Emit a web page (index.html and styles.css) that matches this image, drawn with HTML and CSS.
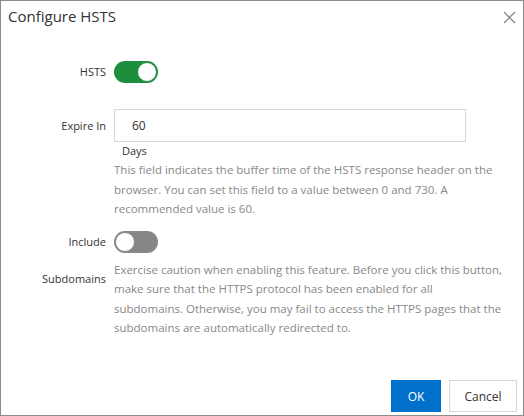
FILE: index.html
```html
<!DOCTYPE html>
<html lang="en">
<head>
    <meta charset="UTF-8">
    <meta name="viewport" content="width=device-width, initial-scale=1.0">
    <title>Configure HSTS</title>
    <link rel="stylesheet" href="styles.css">
</head>
<body>
    <div class="dialog">
        <div class="dialog-header">
            <h2 class="dialog-title">Configure HSTS</h2>
            <button class="close-button" aria-label="Close">
                <svg width="13" height="13" viewBox="0 0 13 13">
                    <path d="M1 1 L12 12 M12 1 L1 12" stroke="#8c8c8c" stroke-width="1.4" fill="none"/>
                </svg>
            </button>
        </div>

        <div class="dialog-body">
            <div class="form-row row-hsts">
                <label class="form-label">HSTS</label>
                <div class="form-control">
                    <span class="switch switch-on"><span class="switch-knob"></span></span>
                </div>
            </div>

            <div class="form-row row-expire">
                <label class="form-label label-input">Expire In</label>
                <div class="form-control">
                    <input type="text" class="text-input" value="60">
                    <div class="unit">Days</div>
                    <p class="help">This field indicates the buffer time of the HSTS response header on the browser. You can set this field to a value between 0 and 730. A recommended value is 60.</p>
                </div>
            </div>

            <div class="form-row row-include">
                <label class="form-label">Include</label>
                <div class="form-control">
                    <span class="switch switch-off"><span class="switch-knob"></span></span>
                </div>
            </div>

            <div class="form-row row-subdomains">
                <label class="form-label label-sub">Subdomains</label>
                <div class="form-control">
                    <p class="help">Exercise caution when enabling this feature. Before you click this button, make sure that the HTTPS protocol has been enabled for all<br>subdomains. Otherwise, you may fail to access the HTTPS pages that the subdomains are automatically redirected to.</p>
                </div>
            </div>
        </div>

        <div class="dialog-footer">
            <button class="btn btn-primary">OK</button>
            <button class="btn btn-default">Cancel</button>
        </div>
    </div>
</body>
</html>
```

FILE: styles.css
```css
html, body {
    margin: 0;
    padding: 0;
    height: 100%;
}
body {
    background-color: #fff;
    font-family: "Open Sans", "Noto Sans", sans-serif;
    color: #333;
}
.dialog {
    display: flex;
    flex-direction: column;
    height: 100vh;
    box-sizing: border-box;
    border: 1px solid #8c8c8c;
}
.dialog-header {
    display: flex;
    align-items: center;
    justify-content: space-between;
    padding: 5px 7px 0 7px;
    height: 21px;
}
.dialog-title {
    margin: 0;
    font-size: 15px;
    font-weight: normal;
    line-height: 21px;
    color: #333;
}
.close-button {
    border: none;
    background: none;
    padding: 0;
    margin-top: 2px;
    cursor: pointer;
    display: flex;
}
.dialog-body {
    padding: 34px 9px 0 7px;
}
.form-row {
    display: flex;
    gap: 8px;
}
.form-label {
    width: 98px;
    flex: none;
    text-align: right;
    font-size: 11px;
    color: #333;
    line-height: 22px;
}
.form-control {
    flex: 1;
    min-width: 0;
}
.row-expire {
    margin-top: 26px;
}
.label-input {
    line-height: 33px;
}
.row-include {
    margin-top: 12px;
}
.row-subdomains {
    margin-top: 7px;
}
.label-sub {
    line-height: 18px;
    padding-top: 10px;
}
.switch {
    display: block;
    position: relative;
    width: 44px;
    height: 22px;
    border-radius: 11px;
    box-sizing: border-box;
}
.switch-on {
    background-color: #1e8e3e;
}
.switch-off {
    background-color: #878787;
}
.switch-knob {
    position: absolute;
    top: 1px;
    width: 20px;
    height: 20px;
    border-radius: 50%;
    background-color: #fff;
    box-sizing: border-box;
}
.switch-on .switch-knob {
    right: 1px;
    border: 1px solid #1e8e3e;
}
.switch-off .switch-knob {
    left: 1px;
    border: 1px solid #878787;
}
.text-input {
    display: block;
    width: 352px;
    height: 33px;
    box-sizing: border-box;
    border: 1px solid #d7d7d7;
    padding: 0 17px;
    font-family: inherit;
    font-size: 12px;
    color: #333;
    outline: none;
}
.unit {
    font-size: 11px;
    line-height: 18px;
    padding-left: 8px;
    color: #333;
}
.help {
    margin: 0;
    font-size: 11.5px;
    line-height: 19.5px;
    color: #888;
}
.dialog-footer {
    margin-top: auto;
    display: flex;
    justify-content: flex-end;
    gap: 8px;
    padding: 0 6px 3px 0;
}
.btn {
    height: 32px;
    font-family: inherit;
    font-size: 12px;
    border-radius: 0;
    cursor: pointer;
}
.btn-primary {
    width: 50px;
    background-color: #0070cc;
    border: 1px solid #0070cc;
    color: #fff;
}
.btn-default {
    width: 68px;
    background-color: #fff;
    border: 1px solid #d7d7d7;
    color: #333;
}
```
